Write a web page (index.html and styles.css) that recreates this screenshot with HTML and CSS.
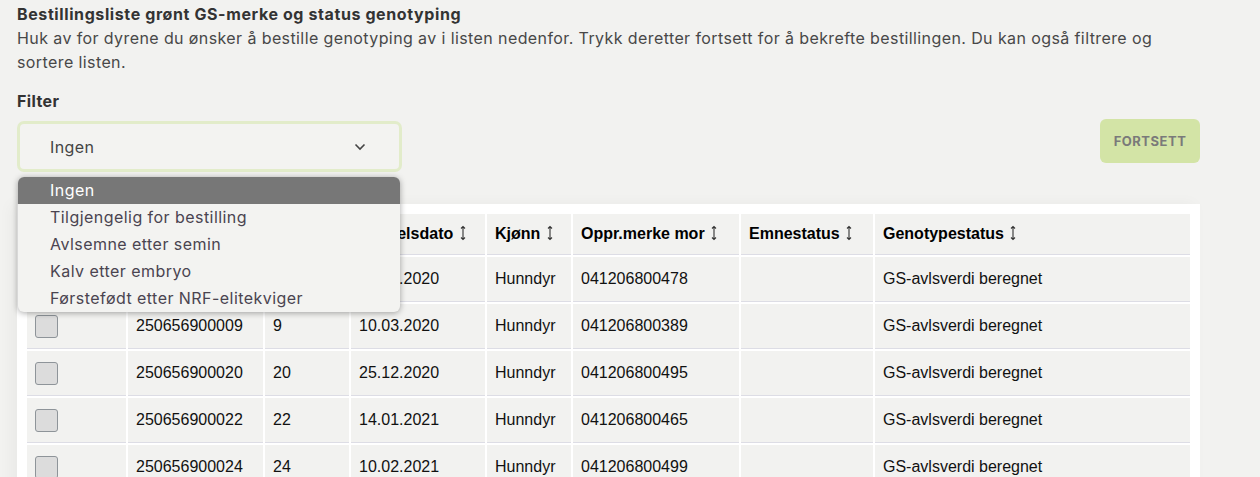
FILE: index.html
```html
<!DOCTYPE html>
<html lang="no">
<head>
<meta charset="utf-8">
<title>Bestillingsliste</title>
<link rel="stylesheet" href="styles.css">
</head>
<body>
<main class="page">
  <h1 class="title">Bestillingsliste grønt GS-merke og status genotyping</h1>
  <p class="intro">Huk av for dyrene du ønsker å bestille genotyping av i listen nedenfor. Trykk deretter fortsett for å bekrefte bestillingen. Du kan også filtrere og sortere listen.</p>
  <div class="filter-label">Filter</div>
  <div class="toolbar">
    <div class="select-wrap">
      <div class="select">
        <span>Ingen</span>
        <svg class="chevron" width="12" height="8" viewBox="0 0 12 8"><path d="M1.5 1.5 L6 6 L10.5 1.5" fill="none" stroke="#444" stroke-width="1.6"/></svg>
      </div>
      <ul class="menu">
        <li class="active">Ingen</li>
        <li>Tilgjengelig for bestilling</li>
        <li>Avlsemne etter semin</li>
        <li>Kalv etter embryo</li>
        <li>Førstefødt etter NRF-elitekviger</li>
      </ul>
    </div>
    <button class="btn">FORTSETT</button>
  </div>
  <div class="table-box">
    <table class="grid">
      <colgroup>
        <col class="c1"><col class="c2"><col class="c3"><col class="c4"><col class="c5"><col class="c6"><col class="c7"><col class="c8">
      </colgroup>
      <thead>
        <tr>
          <th></th>
          <th>Oppr.merke <svg class="sort" width="8" height="16" viewBox="0 0 8 16"><path d="M4 1.5 V14.5 M2 3.5 L4 1.5 L6 3.5 M2 12.5 L4 14.5 L6 12.5" fill="none" stroke="#333" stroke-width="1.1"/></svg></th>
          <th>Nr <svg class="sort" width="8" height="16" viewBox="0 0 8 16"><path d="M4 1.5 V14.5 M2 3.5 L4 1.5 L6 3.5 M2 12.5 L4 14.5 L6 12.5" fill="none" stroke="#333" stroke-width="1.1"/></svg></th>
          <th>Fødselsdato <svg class="sort" width="8" height="16" viewBox="0 0 8 16"><path d="M4 1.5 V14.5 M2 3.5 L4 1.5 L6 3.5 M2 12.5 L4 14.5 L6 12.5" fill="none" stroke="#333" stroke-width="1.1"/></svg></th>
          <th>Kjønn <svg class="sort" width="8" height="16" viewBox="0 0 8 16"><path d="M4 1.5 V14.5 M2 3.5 L4 1.5 L6 3.5 M2 12.5 L4 14.5 L6 12.5" fill="none" stroke="#333" stroke-width="1.1"/></svg></th>
          <th>Oppr.merke mor <svg class="sort" width="8" height="16" viewBox="0 0 8 16"><path d="M4 1.5 V14.5 M2 3.5 L4 1.5 L6 3.5 M2 12.5 L4 14.5 L6 12.5" fill="none" stroke="#333" stroke-width="1.1"/></svg></th>
          <th>Emnestatus <svg class="sort" width="8" height="16" viewBox="0 0 8 16"><path d="M4 1.5 V14.5 M2 3.5 L4 1.5 L6 3.5 M2 12.5 L4 14.5 L6 12.5" fill="none" stroke="#333" stroke-width="1.1"/></svg></th>
          <th>Genotypestatus <svg class="sort" width="8" height="16" viewBox="0 0 8 16"><path d="M4 1.5 V14.5 M2 3.5 L4 1.5 L6 3.5 M2 12.5 L4 14.5 L6 12.5" fill="none" stroke="#333" stroke-width="1.1"/></svg></th>
        </tr>
      </thead>
      <tbody>
        <tr><td><span class="check"></span></td><td>250656900007</td><td>7</td><td>14.02.2020</td><td>Hunndyr</td><td>041206800478</td><td></td><td>GS-avlsverdi beregnet</td></tr>
        <tr><td><span class="check"></span></td><td>250656900009</td><td>9</td><td>10.03.2020</td><td>Hunndyr</td><td>041206800389</td><td></td><td>GS-avlsverdi beregnet</td></tr>
        <tr><td><span class="check"></span></td><td>250656900020</td><td>20</td><td>25.12.2020</td><td>Hunndyr</td><td>041206800495</td><td></td><td>GS-avlsverdi beregnet</td></tr>
        <tr><td><span class="check"></span></td><td>250656900022</td><td>22</td><td>14.01.2021</td><td>Hunndyr</td><td>041206800465</td><td></td><td>GS-avlsverdi beregnet</td></tr>
        <tr><td><span class="check"></span></td><td>250656900024</td><td>24</td><td>10.02.2021</td><td>Hunndyr</td><td>041206800499</td><td></td><td>GS-avlsverdi beregnet</td></tr>
      </tbody>
    </table>
  </div>
</main>
</body>
</html>
```

FILE: styles.css
```css
html, body {
  margin: 0;
  background: #f2f2f0;
}
body {
  font-family: Inter, "Open Sans", sans-serif;
  color: #444;
}
.page {
  width: 1183px;
  padding: 2px 0 0 17px;
}
.title {
  margin: 0;
  font-size: 16px;
  line-height: 24px;
  font-weight: 700;
  letter-spacing: 0.6px;
  color: #333;
}
.intro {
  margin: 0;
  font-size: 16px;
  line-height: 24px;
  letter-spacing: 0.4px;
  color: #484848;
  width: 1170px;
}
.filter-label {
  margin-top: 15px;
  font-size: 16px;
  line-height: 24px;
  font-weight: 700;
  letter-spacing: 0.4px;
  color: #333;
}
.toolbar {
  margin-top: 8px;
  display: flex;
  justify-content: space-between;
  align-items: flex-start;
}
.select-wrap {
  position: relative;
  width: 385px;
}
.select {
  box-sizing: border-box;
  height: 51px;
  border: 3px solid #e2ecca;
  border-radius: 7px;
  background: #f3f3f1;
  display: flex;
  align-items: center;
  justify-content: space-between;
  padding: 0 33px 0 30px;
  font-size: 16px;
  letter-spacing: 0.4px;
  color: #444;
}
.chevron {
  display: block;
}
.menu {
  position: absolute;
  top: 56px;
  left: 1px;
  width: 382px;
  margin: 0;
  padding: 0;
  list-style: none;
  background: #f3f3f1;
  border-radius: 6px;
  box-shadow: 0 1px 6px rgba(0, 0, 0, 0.35);
  overflow: hidden;
  z-index: 5;
}
.menu li {
  height: 27px;
  line-height: 27px;
  padding-left: 32px;
  font-size: 16px;
  letter-spacing: 0.45px;
  color: #4a4450;
}
.menu li.active {
  background: #777;
  color: #fff;
}
.btn {
  margin-top: -2px;
  width: 100px;
  height: 44px;
  border: none;
  border-radius: 6px;
  background: #d3e4a6;
  color: #7a7a7a;
  font-family: Inter, "Open Sans", sans-serif;
  font-weight: 700;
  font-size: 13px;
  letter-spacing: 0.5px;
}
.table-box {
  margin-top: 32px;
  background: #fff;
  padding: 8px;
  box-shadow: -6px 0 14px rgba(0, 0, 0, 0.04);
}
.grid {
  width: 100%;
  border-collapse: separate;
  border-spacing: 2px;
  table-layout: fixed;
  font-family: "Liberation Sans", Arial, sans-serif;
  font-size: 16px;
  color: #111;
}
.c1 { width: 99px; }
.c2 { width: 135px; }
.c3 { width: 84px; }
.c4 { width: 134px; }
.c5 { width: 84px; }
.c6 { width: 166px; }
.c7 { width: 132px; }
.c8 { width: 315px; }
.grid th, .grid td {
  background: #f2f2f0;
  border-bottom: 1px solid #dddde5;
  padding: 0 8px;
  text-align: left;
  white-space: nowrap;
  overflow: hidden;
}
.grid th {
  height: 40px;
  font-weight: 700;
  color: #000;
}
.grid td {
  height: 44px;
}
.sort {
  vertical-align: -2px;
  margin-left: 1px;
}
.check {
  display: block;
  box-sizing: border-box;
  width: 23px;
  height: 23px;
  border: 1px solid #8e9499;
  border-radius: 3px;
  background: #dcdcdc;
}
```
